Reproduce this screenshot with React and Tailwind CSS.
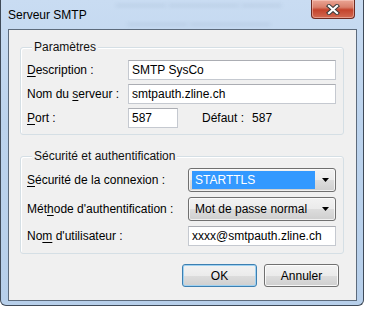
import React from 'react';

// petite lettre soulignée (touche d'accès)
const K = ({ children }) => <span className="underline underline-offset-[2px] decoration-1">{children}</span>;

function TextBox({ value, className = '' }) {
  return (
    <div className={`h-[20px] bg-white border border-[#c5c9d0] border-t-[#abadb3] px-[3px] leading-[18px] text-black whitespace-nowrap overflow-hidden ${className}`}>
      {value}
    </div>
  );
}

function Arrow() {
  return (
    <div className="w-[20px] flex justify-center">
      <svg width="7" height="4" viewBox="0 0 7 4"><path d="M0 0h7L3.5 4z" fill="#000" /></svg>
    </div>
  );
}

function Combo({ value, focused }) {
  return (
    <div className="h-[24px] w-[148px] flex items-center rounded-[3px] border border-[#707070] bg-[linear-gradient(#f2f2f2,#ebebeb_50%,#dddddd_50%,#cfcfcf)] shadow-[inset_0_0_0_1px_rgba(255,255,255,0.7)]">
      {focused ? (
        <div className="ml-[3px] w-[123px] h-[18px] bg-[#3399ff] text-white leading-[18px] px-[3px]">{value}</div>
      ) : (
        <div className="ml-[3px] w-[123px] h-[18px] text-black leading-[18px] px-[3px]">{value}</div>
      )}
      <Arrow />
    </div>
  );
}

function Group({ title, children, className = '' }) {
  return (
    <fieldset className={`w-[324px] ml-[11px] border border-[#d5dfe5] rounded-[3px] shadow-[inset_1px_1px_0_#fff] px-[6px] ${className}`}>
      <legend className="ml-[5px] px-[2px] leading-[15px] text-[#111] bg-[#f0f0f0]">{title}</legend>
      {children}
    </fieldset>
  );
}

function Row({ label, width, children }) {
  return (
    <div className="flex items-center">
      <div className="shrink-0 text-black" style={{ width }}>{label}</div>
      {children}
    </div>
  );
}

function Btn({ children, primary }) {
  return (
    <div className={`w-[75px] h-[23px] flex items-center justify-center rounded-[3px] border text-black bg-[linear-gradient(#f2f2f2,#ebebeb_50%,#dddddd_50%,#cfcfcf)] ${primary ? 'border-[#3c7fb1] shadow-[inset_0_0_0_1px_#9fd1f1]' : 'border-[#707070] shadow-[inset_0_0_0_1px_rgba(255,255,255,0.8)]'}`}>
      {children}
    </div>
  );
}

export default function App() {
  return (
    <div className="w-[365px] h-[309px] bg-white font-['Liberation_Sans',Arial,sans-serif] text-[12px] overflow-hidden">
      <div className="w-[364px] h-[306px] border-x border-b border-[#3f4a58] rounded-b-[6px] bg-[linear-gradient(180deg,#c9dcf2,#bcd3ed_40%,#b7cfea)] flex flex-col pl-[7px] pr-[6px] pb-[4px]">
        {/* barre de titre */}
        <div className="h-[29px] flex items-start shrink-0">
          <div className="pt-[8px] leading-[14px] text-black">Serveur SMTP</div>
          <div className="flex-1 flex flex-col items-center pt-[1px] gap-[11px] blur-[2px] opacity-40 text-[#3d5878] text-[10px] leading-[8px]">
            <span>————— ——————— ————</span>
            <span>—————— ————————</span>
          </div>
          <div className="w-[44px] h-[19px] mr-[2px] flex items-center justify-center rounded-b-[4px] border border-t-0 border-[#6e2b22] bg-[linear-gradient(#eba595,#d9806c_40%,#c4432c_55%,#d26a52)] shadow-[inset_0_0_0_1px_rgba(255,220,210,0.45)]">
            <svg width="14" height="11" viewBox="0 0 14 11">
              <path d="M3 2L11 9M11 2L3 9" stroke="#3b3b3b" strokeWidth="4.2" strokeLinecap="square" />
              <path d="M3 2L11 9M11 2L3 9" stroke="#fff" strokeWidth="2.2" strokeLinecap="square" />
            </svg>
          </div>
        </div>

        {/* zone client */}
        <div className="flex-1 border border-[#5d6b7c] bg-[#f0f0f0] flex flex-col">
          <Group title="Paramètres" className="mt-[10px] pt-[5px] pb-[6px]">
            <div className="flex flex-col gap-[4px]">
              <Row label={<><K>D</K>escription :</>} width={101}>
                <TextBox value="SMTP SysCo" className="w-[208px]" />
              </Row>
              <Row label={<>Nom du <K>s</K>erveur :</>} width={101}>
                <TextBox value="smtpauth.zline.ch" className="w-[208px]" />
              </Row>
              <Row label={<><K>P</K>ort :</>} width={101}>
                <TextBox value="587" className="w-[50px]" />
                <span className="ml-[24px] text-black">Défaut :</span>
                <span className="ml-[8px] text-black">587</span>
              </Row>
            </div>
          </Group>

          <Group title="Sécurité et authentification" className="mt-[14px] pt-[4px] pb-[7px]">
            <div className="flex flex-col gap-[5px]">
              <Row label={<><K>S</K>écurité de la connexion :</>} width={161}>
                <Combo value="STARTTLS" focused />
              </Row>
              <Row label={<>Mét<K>h</K>ode d'authentification :</>} width={161}>
                <Combo value="Mot de passe normal" />
              </Row>
              <Row label={<>No<K>m</K> d'utilisateur :</>} width={161}>
                <TextBox value="xxxx@smtpauth.zline.ch" className="w-[148px]" />
              </Row>
            </div>
          </Group>

          <div className="mt-[10px] flex justify-end gap-[7px] pr-[17px]">
            <Btn primary>OK</Btn>
            <Btn>Annuler</Btn>
          </div>
        </div>
      </div>
    </div>
  );
}
